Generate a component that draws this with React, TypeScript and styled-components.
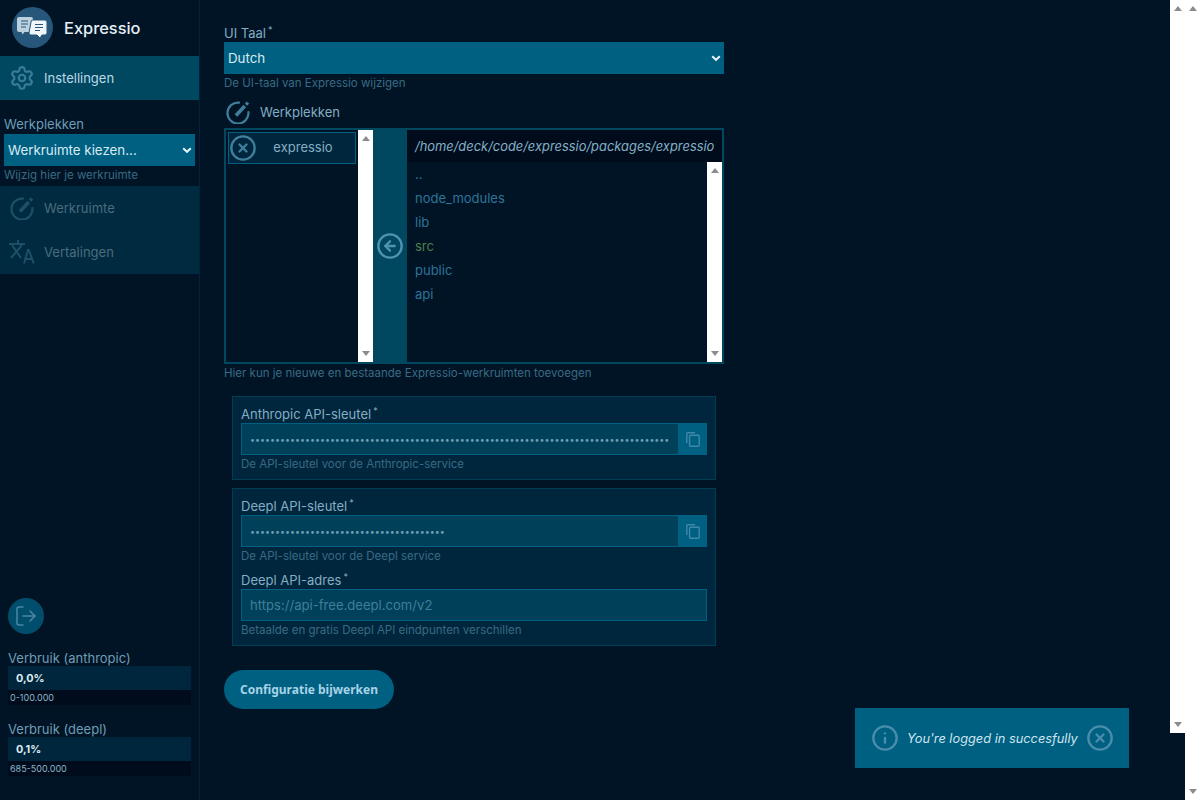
import React from 'react';
import styled, { createGlobalStyle } from 'styled-components';
import { Settings, CircleX, CircleArrowLeft, LogOut, Info } from 'lucide-react';

const Global = createGlobalStyle`
  html, body { margin: 0; height: 100%; overflow: hidden; background: #001426; font-family: Inter, "Liberation Sans", sans-serif; }
  #root { height: 100%; }
  * { box-sizing: border-box; }
`;

const Page = styled.div`
  display: flex;
  height: 800px;
  width: 1200px;
  overflow: hidden;
  position: relative;
  background: #001426;
`;
const ScrollTrack = styled.div<{ $h?: string }>`
  width: 15px;
  flex: none;
  height: ${p => p.$h ?? 'auto'};
  align-self: ${p => (p.$h ? 'flex-start' : 'stretch')};
  background: #fff;
  display: flex;
  flex-direction: column;
  justify-content: space-between;
  align-items: center;
  padding: 6px 0;
`;
const ScrollArrow = styled.i<{ $down?: boolean }>`
  display: block;
  width: 0;
  height: 0;
  border-left: 4.5px solid transparent;
  border-right: 4.5px solid transparent;
  ${p => (p.$down ? 'border-top: 5px solid #8c8c8c;' : 'border-bottom: 5px solid #8c8c8c;')}
`;
const Scrollbar = ({ h }: { h?: string }) => (
  <ScrollTrack $h={h}>
    <ScrollArrow />
    <ScrollArrow $down />
  </ScrollTrack>
);
const Sidebar = styled.aside`
  width: 200px;
  flex: none;
  height: 800px;
  display: flex;
  flex-direction: column;
  padding-bottom: 8px;
  border-right: 1px solid #00243a;
  background: #001426;
`;
const Brand = styled.div`
  height: 56px;
  display: flex;
  align-items: center;
  gap: 11px;
  padding: 0 0 0 12px;
  color: #e4eef4;
  font-size: 16.4px;
  font-weight: 500;
`;
const LogoWrap = styled.div`
  width: 41px;
  height: 41px;
  flex: none;
  margin-top: -1px;
`;
const MenuItem = styled.div<{ $active?: boolean }>`
  height: 44px;
  display: flex;
  align-items: center;
  gap: 10px;
  padding-left: 10px;
  font-size: 13px;
  background: ${p => (p.$active ? '#004860' : 'transparent')};
  color: ${p => (p.$active ? '#bcd8e6' : '#4a6c7e')};
  svg { flex: none; width: 24px; height: 24px; color: ${p => (p.$active ? '#3a7c98' : '#1d5068')}; }
`;
const GearSlot = styled.span`
  display: flex;
  width: 24px;
  justify-content: center;
  svg { width: 26px; height: 26px; }
`;
const WorkspacePicker = styled.div`
  padding: 16px 4px 0;
  height: 86px;
`;
const SideLabel = styled.div`
  font-size: 13px;
  line-height: 16px;
  color: #6f9db4;
  height: 18px;
`;
const SelectBox = styled.div`
  height: 32px;
  background: #006082;
  color: #d8ebf3;
  display: flex;
  align-items: center;
  justify-content: space-between;
  padding: 0 3px 0 4px;
  font-size: 13.33px;
  svg { width: 10px; height: 10px; }
`;
const SideHelp = styled.div`
  font-size: 11.5px;
  line-height: 18px;
  color: #3a6a82;
`;
const DisabledGroup = styled.div`
  background: #002a40;
`;
const Grow = styled.div`flex: 1;`;
const ExitButton = styled.div`
  width: 36px;
  height: 36px;
  margin: 0 0 16px 8px;
  border-radius: 50%;
  background: #004e6b;
  color: #4a88a3;
  display: flex;
  align-items: center;
  justify-content: center;
  svg { width: 24px; height: 24px; }
`;
const Usage = styled.div`
  padding: 0 8px;
  margin-bottom: 16px;
`;
const UsageLabel = styled.div`
  font-size: 13px;
  line-height: 16px;
  color: #6f9db4;
`;
const UsageBar = styled.div`
  height: 24px;
  background: #00263e;
  color: #dfeaf0;
  font-size: 10.8px;
  font-weight: 700;
  line-height: 25px;
  padding-left: 8px;
`;
const UsageRange = styled.div`
  height: 15px;
  background: #000c1c;
  color: #8fb4c8;
  font-size: 9px;
  line-height: 15px;
  padding-left: 2px;
`;
const Main = styled.main`
  flex: 1;
  min-width: 0;
  height: 733px;
  padding: 24px 0 0 24px;
`;
const Form = styled.div`
  width: 500px;
`;
const FieldLabel = styled.div`
  font-size: 13px;
  line-height: 18px;
  color: #84aec2;
  sup { font-size: 9px; line-height: 0; margin-left: 2px; vertical-align: 5px; }
`;
const Help = styled.div`
  font-size: 11.5px;
  line-height: 18px;
  color: #3a6a82;
`;
const WsHeader = styled.div`
  height: 36px;
  display: flex;
  align-items: center;
  gap: 10px;
  padding: 4px 0 0 2px;
  font-size: 13px;
  color: #84aec2;
  svg { width: 24px; height: 24px; flex: none; }
`;
const Browser = styled.div`
  height: 236px;
  border: 2px solid #004860;
  display: flex;
`;
const LeftList = styled.div`
  width: 132px;
  flex: none;
  padding: 2px 2px 0 2px;
`;
const WsChip = styled.div`
  width: 128px;
  height: 32px;
  border: 1px solid #006082;
  background: #00263e;
  display: flex;
  align-items: center;
  font-size: 13px;
  color: #84aec2;
  svg { width: 28px; height: 28px; color: #3f7f9b; flex: none; }
`;
const ChipText = styled.span`
  flex: 1;
  text-align: center;
  padding: 0 6px 2px 0;
`;
const MoveColumn = styled.div`
  width: 34px;
  flex: none;
  background: #004860;
  display: flex;
  align-items: center;
  justify-content: center;
  svg { width: 28px; height: 28px; color: #4f93ae; }
`;
const RightPane = styled.div`
  flex: 1;
  min-width: 0;
  display: flex;
  flex-direction: column;
`;
const PathBar = styled.div`
  height: 32px;
  flex: none;
  background: #000c1c;
  color: #84b0c6;
  font-size: 12.9px;
  font-style: italic;
  line-height: 33px;
  padding-left: 8px;
  white-space: nowrap;
`;
const DirPane = styled.div`
  flex: 1;
  min-height: 0;
  display: flex;
`;
const DirList = styled.div`
  flex: 1;
  min-width: 0;
`;
const DirRow = styled.div<{ $git?: boolean }>`
  height: 24px;
  line-height: 24px;
  padding-left: 8px;
  font-size: 13px;
  color: ${p => (p.$git ? '#4f7f4a' : '#2f7396')};
`;
const Section = styled.section<{ $first?: boolean }>`
  margin: ${p => (p.$first ? '14px' : '8px')} 8px 0;
  width: 484px;
  padding: 8px 8px 6px;
  border: 1px solid #003e56;
  background: #00263e;
`;
const SectionGap = styled.div`
  height: 6px;
`;
const InputRow = styled.div`
  display: flex;
  height: 32px;
  border: 1px solid #006082;
  background: #004058;
  align-items: center;
`;
const InputValue = styled.div<{ $secret?: boolean }>`
  flex: 1;
  min-width: 0;
  padding-left: 8px;
  overflow: hidden;
  white-space: nowrap;
  color: ${p => (p.$secret ? '#6d9fb6' : '#3f7f9b')};
  font-size: ${p => (p.$secret ? '8.9px' : '13.1px')};
`;
const CopyButton = styled.div`
  width: 29px;
  height: 32px;
  margin: -1px -1px -1px 0;
  background: #006082;
  display: flex;
  align-items: center;
  justify-content: center;
  flex: none;
  svg { width: 14px; height: 15px; color: #3f88a7; }
`;
const SubmitButton = styled.button`
  display: block;
  margin-top: 24px;
  width: 170px;
  height: 39px;
  border: 0;
  border-radius: 20px;
  background: #006082;
  color: #a9d3e6;
  font-family: "Noto Sans", sans-serif;
  font-weight: 700;
  font-size: 12px;
`;
const Toast = styled.div`
  position: absolute;
  left: 855px;
  top: 708px;
  width: 274px;
  height: 60px;
  background: #006082;
  display: flex;
  align-items: center;
  padding-left: 16px;
  gap: 8px;
  color: #cfe5ef;
  font-size: 12.8px;
  font-style: italic;
  svg { width: 28px; height: 28px; color: #4a8cab; flex: none; }
`;

const Chevron = () => (
  <svg viewBox="0 0 10 10"><path d="M1.200 3.200 5 6.800l3.800-3.600" fill="none" stroke="#e6f2f7" strokeWidth="2" /></svg>
);
const EditCircle = ({ color }: { color: string }) => (
  <svg viewBox="0 0 24 24" fill="none" stroke={color} strokeWidth="2.200" strokeLinecap="round">
    <path d="M13 2.600A10.500 10.500 0 1 0 22.400 12" />
    <path d="M10 15.500 18.800 6" strokeWidth="3.600" strokeLinecap="butt" />
    <path d="M20 4.700 22 2.500" strokeWidth="3.200" strokeLinecap="butt" />
  </svg>
);
const Translate = () => (
  <svg viewBox="0 0 26 24" style={{ width: 26, height: 24, marginRight: -1, marginLeft: -1 }} fill="none" stroke="currentColor" strokeWidth="2">
    <path d="M0 4h16M9 0v4M3 5l9 13M13 5 2 18" />
    <path d="M15 23.500 19 10h.8l5 13.500M16.500 19h7" />
  </svg>
);
const Copy = () => (
  <svg viewBox="0 0 14 15" fill="none" stroke="currentColor" strokeWidth="1.400">
    <path d="M.8 11V1.800A1 1 0 0 1 1.800.8H9" />
    <rect x="3.600" y="3.200" width="9.600" height="11.100" rx="1" />
  </svg>
);
const Logo = () => (
  <svg viewBox="0 0 41 41" width="41" height="41">
    <circle cx="20.500" cy="20.500" r="20.500" fill="#26567a" />
    <path d="M5 12q0-2 2-2h12q2 0 2 2v11q0 2-2 2H12.500l-2 2.500-1-2.500H7q-2 0-2-2z" fill="#bcd0de" />
    <path d="M9 14h7M9 17h7M9 20h5" stroke="#26567a" strokeWidth="1.200" />
    <path d="M19 15q0-2 2-2h12q2 0 2 2v11q0 2-2 2h-3l-2 3-3-3h-6q-2 0-2-2z" fill="#f0f6fa" stroke="#26567a" strokeWidth="1" />
    <path d="M23 17.500h8M23 20.500h8M23 23.500h5" stroke="#26567a" strokeWidth="1.200" />
  </svg>
);

const dirs = ['..', 'node_modules', 'lib', 'src', 'public', 'api'];

export default function App() {
  return (
    <Page>
      <Global />
      <Sidebar>
        <Brand><LogoWrap><Logo /></LogoWrap>Expressio</Brand>
        <MenuItem $active><GearSlot><Settings strokeWidth={2} /></GearSlot>Instellingen</MenuItem>
        <WorkspacePicker>
          <SideLabel>Werkplekken</SideLabel>
          <SelectBox>Werkruimte kiezen...<Chevron /></SelectBox>
          <SideHelp>Wijzig hier je werkruimte</SideHelp>
        </WorkspacePicker>
        <DisabledGroup>
          <MenuItem><EditCircle color="#1d5068" />Werkruimte</MenuItem>
          <MenuItem><Translate />Vertalingen</MenuItem>
        </DisabledGroup>
        <Grow />
        <ExitButton><LogOut strokeWidth={1.500} /></ExitButton>
        <Usage>
          <UsageLabel>Verbruik (anthropic)</UsageLabel>
          <UsageBar>0,0%</UsageBar>
          <UsageRange>0-100.000</UsageRange>
        </Usage>
        <Usage>
          <UsageLabel>Verbruik (deepl)</UsageLabel>
          <UsageBar>0,1%</UsageBar>
          <UsageRange>685-500.000</UsageRange>
        </Usage>
      </Sidebar>
      <Main>
        <Form>
          <FieldLabel>UI Taal<sup>*</sup></FieldLabel>
          <SelectBox>Dutch<Chevron /></SelectBox>
          <Help>De UI-taal van Expressio wijzigen</Help>
          <WsHeader><EditCircle color="#3f7f9b" />Werkplekken</WsHeader>
          <Browser>
            <LeftList>
              <WsChip><CircleX strokeWidth={2} /><ChipText>expressio</ChipText></WsChip>
            </LeftList>
            <Scrollbar />
            <MoveColumn><CircleArrowLeft strokeWidth={2} /></MoveColumn>
            <RightPane>
              <PathBar>/home/deck/code/expressio/packages/expressio</PathBar>
              <DirPane>
                <DirList>
                  {dirs.map(d => <DirRow key={d} $git={d === 'src'}>{d}</DirRow>)}
                </DirList>
                <Scrollbar />
              </DirPane>
            </RightPane>
          </Browser>
          <Help>Hier kun je nieuwe en bestaande Expressio-werkruimten toevoegen</Help>
          <Section $first>
            <FieldLabel>Anthropic API-sleutel<sup>*</sup></FieldLabel>
            <InputRow>
              <InputValue $secret>{'•'.repeat(84)}</InputValue>
              <CopyButton><Copy /></CopyButton>
            </InputRow>
            <Help>De API-sleutel voor de Anthropic-service</Help>
          </Section>
          <Section>
            <FieldLabel>Deepl API-sleutel<sup>*</sup></FieldLabel>
            <InputRow>
              <InputValue $secret>{'•'.repeat(39)}</InputValue>
              <CopyButton><Copy /></CopyButton>
            </InputRow>
            <Help>De API-sleutel voor de Deepl service</Help>
            <SectionGap />
            <FieldLabel>Deepl API-adres<sup>*</sup></FieldLabel>
            <InputRow>
              <InputValue>https://api-free.deepl.com/v2</InputValue>
            </InputRow>
            <Help>Betaalde en gratis Deepl API eindpunten verschillen</Help>
          </Section>
          <SubmitButton>Configuratie bijwerken</SubmitButton>
        </Form>
      </Main>
      <Scrollbar h="733px" />
      <Scrollbar />
      <Toast>
        <Info strokeWidth={2} />
        <span>You're logged in succesfully</span>
        <CircleX strokeWidth={2} />
      </Toast>
    </Page>
  );
}
